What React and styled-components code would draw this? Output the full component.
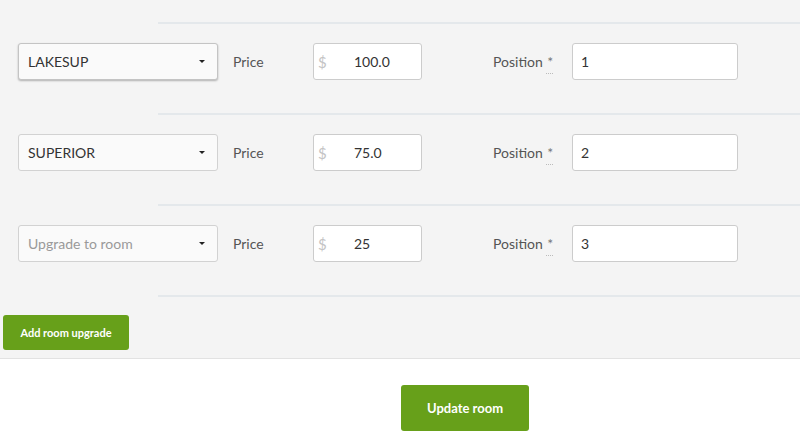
import React from 'react';
import styled, { createGlobalStyle } from 'styled-components';

const GlobalStyle = createGlobalStyle`
	html, body {
		margin: 0;
		padding: 0;
		background: #fff;
		font-family: Lato, "Open Sans", sans-serif;
		color: #333;
	}
`;

const Page = styled.div`
	width: 800px;
	height: 442px;
	overflow: hidden;
`;

const Panel = styled.div`
	background: #f4f4f4;
	border-bottom: 1px solid #e2e2e2;
	padding: 22px 0 8px;
`;

const Divider = styled.div`
	height: 2px;
	margin-left: 158px;
	background: #e4e8eb;
`;

const Row = styled.div`
	display: flex;
	align-items: center;
	padding: 19px 0 33px 18px;
`;

const Select = styled.div`
	box-sizing: border-box;
	width: 200px;
	height: 37px;
	display: flex;
	align-items: center;
	justify-content: space-between;
	padding: 0 12px 0 9px;
	background: #fafafa;
	border: 1px solid ${props => (props.$active ? '#c4c4c4' : '#d2d2d2')};
	border-radius: 3px;
	box-shadow: ${props => (props.$active ? '0 1px 2px rgba(0,0,0,0.28)' : 'none')};
	font-size: 14px;
	color: ${props => (props.$placeholder ? '#999' : '#333')};
`;

const Caret = styled.span`
	width: 0;
	height: 0;
	border-left: 3px solid transparent;
	border-right: 3px solid transparent;
	border-top: 3px solid #222;
`;

const Label = styled.span`
	width: ${props => props.width}px;
	margin-left: ${props => props.offset}px;
	font-size: 14px;
	color: #555;
`;

const Required = styled.abbr`
	text-decoration: none;
	border-bottom: 1px dotted #bbb;
	padding: 0 0 3px 1px;
	color: #777;
`;

const Input = styled.div`
	box-sizing: border-box;
	width: ${props => props.width}px;
	height: 37px;
	display: flex;
	align-items: center;
	background: #fff;
	border: 1px solid #ccc;
	border-radius: 3px;
	font-size: 14px;
	color: #333;
	padding-left: ${props => (props.$addon ? 4 : 8)}px;
`;

const Addon = styled.span`
	width: 36px;
	color: #c4c4c4;
	font-size: 15px;
`;

const Button = styled.button`
	box-sizing: border-box;
	border: none;
	border-radius: 3px;
	background: #67a01a;
	color: #fff;
	font-family: Lato, "Open Sans", sans-serif;
	font-weight: 700;
	font-size: ${props => (props.$large ? '13px' : '11px')};
	width: ${props => (props.$large ? '128px' : '126px')};
	height: ${props => (props.$large ? '46px' : '35px')};
	margin-left: ${props => (props.$large ? '401px' : '3px')};
	padding: 0;
`;

const Actions = styled.div`
	padding-top: ${props => props.$top}px;
`;

const upgrades = [
	{ room: 'LAKESUP', price: '100.0', position: '1', active: true },
	{ room: 'SUPERIOR', price: '75.0', position: '2' },
	{ room: 'Upgrade to room', price: '25', position: '3', placeholder: true },
];

const App = () => (
	<Page>
		<GlobalStyle />
		<Panel>
			<Divider />
			{upgrades.map(u => (
				<React.Fragment key={u.position}>
					<Row>
						<Select $active={u.active} $placeholder={u.placeholder}>
							{u.room}
							<Caret />
						</Select>
						<Label offset={15} width={80}>
							Price
						</Label>
						<Input width={109} $addon>
							<Addon>$</Addon>
							{u.price}
						</Input>
						<Label offset={71} width={79}>
							Position <Required title="required">*</Required>
						</Label>
						<Input width={166}>{u.position}</Input>
					</Row>
					<Divider />
				</React.Fragment>
			))}
			<Actions $top={18}>
				<Button>Add room upgrade</Button>
			</Actions>
		</Panel>
		<Actions $top={26}>
			<Button $large>Update room</Button>
		</Actions>
	</Page>
);

export default App;
